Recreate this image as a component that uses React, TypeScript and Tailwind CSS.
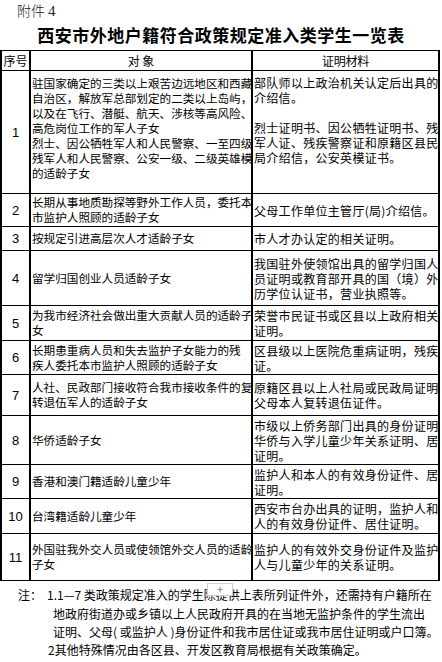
import React from 'react';

type Row = {
    no: string;
    h: string;
    left: string[];
    right: string[];
    top?: boolean;
};

const rows: Row[] = [
    {
        no: '1',
        h: 'h-[123px]',
        top: true,
        left: [
            '驻国家确定的三类以上艰苦边远地区和西藏',
            '自治区，解放军总部划定的二类以上岛屿，',
            '以及在飞行、潜艇、航天、涉核等高风险、',
            '高危岗位工作的军人子女',
            '烈士、因公牺牲军人和人民警察、一至四级伤',
            '残军人和人民警察、公安一级、二级英雄模范',
            '的适龄子女',
        ],
        right: [
            '部队师以上政治机关认定后出具的',
            '介绍信。',
            '\u00a0',
            '烈士证明书、因公牺牲证明书、残疾',
            '军人证、残疾警察证和原籍区县民政',
            '局介绍信，公安英模证书。',
        ],
    },
    {
        no: '2',
        h: 'h-[33px]',
        left: ['长期从事地质勘探等野外工作人员，委托本', '市监护人照顾的适龄子女'],
        right: ['父母工作单位主管厅(局)介绍信。'],
    },
    {
        no: '3',
        h: 'h-[24px]',
        left: ['按规定引进高层次人才适龄子女'],
        right: ['市人才办认定的相关证明。'],
    },
    {
        no: '4',
        h: 'h-[55px]',
        left: ['留学归国创业人员适龄子女'],
        right: ['我国驻外使领馆出具的留学归国人', '员证明或教育部开具的国（境）外学', '历学位认证书，营业执照等。'],
    },
    {
        no: '5',
        h: 'h-[35px]',
        left: ['为我市经济社会做出重大贡献人员的适龄子', '女'],
        right: ['荣誉市民证书或区县以上政府相关', '证明。'],
    },
    {
        no: '6',
        h: 'h-[34px]',
        left: ['长期患重病人员和失去监护子女能力的残', '疾人委托本市监护人照顾的适龄子女'],
        right: ['区县级以上医院危重病证明，残疾', '证。'],
    },
    {
        no: '7',
        h: 'h-[41px]',
        left: ['人社、民政部门接收符合我市接收条件的复', '转退伍军人的适龄子女'],
        right: ['原籍区县以上人社局或民政局证明，', '父母本人复转退伍证件。'],
    },
    {
        no: '8',
        h: 'h-[49px]',
        left: ['华侨适龄子女'],
        right: ['市级以上侨务部门出具的身份证明、', '华侨与入学儿童少年关系证明、居住', '证明。'],
    },
    {
        no: '9',
        h: 'h-[34px]',
        left: ['香港和澳门籍适龄儿童少年'],
        right: ['监护人和本人的有效身份证件、居住', '证明。'],
    },
    {
        no: '10',
        h: 'h-[35px]',
        left: ['台湾籍适龄儿童少年'],
        right: ['西安市台办出具的证明，监护人和本', '人的有效身份证件、居住证明。'],
    },
    {
        no: '11',
        h: 'h-[47px]',
        left: ['外国驻我外交人员或使领馆外交人员的适龄', '子女'],
        right: ['监护人的有效外交身份证件及监护', '人与儿童少年的关系证明。'],
    },
];

// each line is kept on one row; the cell clips what runs past its border
const Lines: React.FC<{ lines: string[]; className: string }> = ({ lines, className }) => (
    <div className={className}>
        {lines.map((l, i) => (
            <div key={i} className="whitespace-nowrap">
                {l}
            </div>
        ))}
    </div>
);

export default function App() {
    return (
        <div className="relative w-[442px] h-[662px] bg-white text-black font-['Noto_Sans_CJK_SC',sans-serif]">
            <div className="pl-[17px] pt-[1px] h-[22px] text-[14px] leading-[19px] font-light text-[#222]">
                附件 <span className="font-['Liberation_Serif',serif] text-[15px]">4</span>
            </div>
            <h1 className="h-[28px] text-center text-[17px] leading-[26px] font-bold tracking-[0.5px]">
                西安市外地户籍符合政策规定准入类学生一览表
            </h1>

            <div className="w-[440px] border-t border-x-2 border-black">
                <div className="flex h-[20px] border-b border-black text-[12px] leading-[19px]">
                    <div className="w-[29px] shrink-0 border-r-2 border-black text-center">序号</div>
                    <div className="w-[222px] shrink-0 border-r-2 border-black text-center">对 象</div>
                    <div className="flex-1 text-center tracking-[-0.3px]">证明材料</div>
                </div>
                {rows.map((r) => (
                    <div key={r.no} className={`flex ${r.h} border-b border-black leading-[15px]`}>
                        <div className="w-[29px] shrink-0 border-r-2 border-black flex items-center justify-center text-[13px] font-['Liberation_Sans',sans-serif]">
                            {r.no}
                        </div>
                        <div
                            className={`w-[222px] shrink-0 border-r-2 border-black overflow-hidden flex flex-col ${
                                r.top ? 'justify-start pt-[5px]' : 'justify-center'
                            }`}
                        >
                            <Lines lines={r.left} className="pl-[1px] text-[11.6px]" />
                        </div>
                        <div
                            className={`flex-1 overflow-hidden flex flex-col ${
                                r.top ? 'justify-start pt-[4px]' : 'justify-center'
                            }`}
                        >
                            <Lines lines={r.right} className="pl-[1px] text-[12px] tracking-[0.3px]" />
                        </div>
                    </div>
                ))}
            </div>

            <div className="relative text-[12px] leading-[19px] pt-[4px]">
                <div className="flex whitespace-nowrap">
                    <span className="pl-[18px] w-[47px] shrink-0">注：</span>
                    <span>1.1—7 类政策规定准入的学生除提供上表所列证件外，还需持有户籍所在</span>
                </div>
                <div className="pl-[53px] whitespace-nowrap">地政府街道办或乡镇以上人民政府开具的在当地无监护条件的学生流出</div>
                <div className="pl-[53px] whitespace-nowrap leading-[18px]">证明、父母( 或监护人 )身份证件和我市居住证或我市居住证明或户口簿。</div>
                <div className="pl-[48px] whitespace-nowrap leading-[18px]">2其他特殊情况由各区县、开发区教育局根据有关政策确定。</div>
                {/* small floating "+" handle over the first note line */}
                <div className="absolute left-[207px] top-[2px] w-[26px] h-[13px] bg-white border border-[#cfcfcf] flex items-center justify-center text-[11px] leading-none text-[#777]">
                    +
                </div>
            </div>
        </div>
    );
}
